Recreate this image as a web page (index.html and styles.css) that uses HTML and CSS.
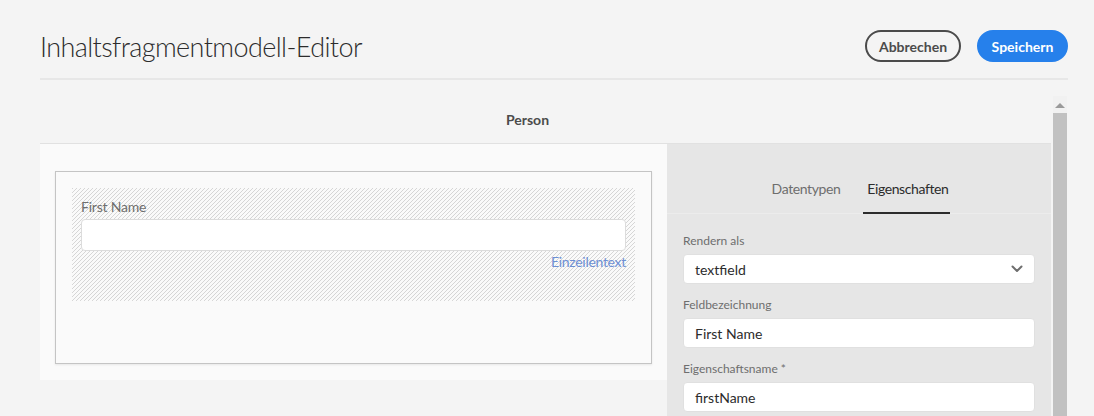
FILE: index.html
```html
<!DOCTYPE html>
<html lang="de">
<head>
<meta charset="utf-8">
<title>Inhaltsfragmentmodell-Editor</title>
<link rel="stylesheet" href="styles.css">
</head>
<body>
<div class="page">
  <header class="topbar">
    <h1 class="title">Inhaltsfragmentmodell-Editor</h1>
    <div class="actions">
      <button class="btn btn-secondary">Abbrechen</button>
      <button class="btn btn-primary">Speichern</button>
    </div>
  </header>

  <div class="workspace">
    <div class="editor">
      <div class="model-name">Person</div>
      <div class="panes">
        <div class="canvas">
          <div class="card">
            <div class="field-drop">
              <div class="field-label">First Name</div>
              <div class="field-input"></div>
              <div class="field-type">Einzeilentext</div>
            </div>
          </div>
        </div>
        <aside class="sidebar">
          <nav class="tabs">
            <span class="tab">Datentypen</span>
            <span class="tab tab-active">Eigenschaften</span>
          </nav>
          <div class="form">
            <div class="form-field">
              <label class="form-label">Rendern als</label>
              <div class="input select">
                <span>textfield</span>
                <svg class="chevron" width="12" height="8" viewBox="0 0 12 8"><path d="M1.5 1.5 L6 6 L10.5 1.5" fill="none" stroke="#6e6e6e" stroke-width="2" stroke-linecap="round" stroke-linejoin="round"/></svg>
              </div>
            </div>
            <div class="form-field">
              <label class="form-label">Feldbezeichnung</label>
              <div class="input">First Name</div>
            </div>
            <div class="form-field">
              <label class="form-label">Eigenschaftsname *</label>
              <div class="input">firstName</div>
            </div>
          </div>
        </aside>
      </div>
    </div>
    <div class="scrollbar">
      <div class="scroll-up"><svg width="10" height="6" viewBox="0 0 10 6"><path d="M0 6 L5 1 L10 6 Z" fill="#9a9a9a"/></svg></div>
      <div class="scroll-thumb"></div>
    </div>
  </div>
</div>
</body>
</html>
```

FILE: styles.css
```css
* { box-sizing: border-box; }
html, body { margin: 0; padding: 0; }
body {
  background: #f4f4f4;
  font-family: Lato, "Open Sans", sans-serif;
  color: #4b4b4b;
  height: 416px;
  overflow: hidden;
}
.page {
  padding: 0 26px 0 40px;
}
.topbar {
  height: 80px;
  padding-top: 14px;
  display: flex;
  align-items: flex-start;
  justify-content: space-between;
  border-bottom: 2px solid #e7e7e7;
}
.title {
  margin: 0;
  height: 64px;
  display: flex;
  align-items: center;
  font-size: 27px;
  font-weight: 300;
  color: #2c2c2c;
  letter-spacing: -0.6px;
}
.actions {
  height: 64px;
  display: flex;
  align-items: center;
  gap: 16px;
}
.btn {
  height: 32px;
  border-radius: 16px;
  font-family: inherit;
  font-size: 14px;
  font-weight: 700;
  padding: 0 10px;
  cursor: pointer;
}
.btn-secondary {
  width: 96px;
  background: transparent;
  border: 2px solid #4b4b4b;
  color: #4b4b4b;
}
.btn-primary {
  width: 91px;
  background: #2680eb;
  border: 2px solid #2680eb;
  color: #fff;
}
.workspace {
  margin-top: 16px;
  display: flex;
  gap: 2px;
  margin-right: 1px;
}
.editor {
  flex: 1;
}
.model-name {
  height: 48px;
  border-bottom: 1px solid #e1e1e1;
  display: flex;
  align-items: center;
  justify-content: center;
  padding-right: 36px;
  font-size: 14px;
  font-weight: 700;
  color: #4b4b4b;
}
.panes {
  display: flex;
  align-items: flex-start;
}
.canvas {
  width: 627px;
  height: 236px;
  background: #fafafa;
  padding: 27px 15px 0 15px;
}
.card {
  height: 193px;
  border: 1px solid #c4c4c4;
  background: #fafafa;
  box-shadow: 0 1px 2px rgba(0,0,0,0.08);
  padding: 16px;
}
.field-drop {
  height: 113px;
  padding: 10px 9px 0 9px;
  background: repeating-linear-gradient(135deg, #d6d6d6 0 0.8px, transparent 0.8px 2.83px);
}
.field-label {
  font-size: 14px;
  line-height: 18px;
  color: #6e6e6e;
  margin-bottom: 3px;
  letter-spacing: -0.2px;
}
.field-input {
  height: 32px;
  background: #fff;
  border: 1px solid #dcdcdc;
  border-radius: 4px;
}
.field-type {
  margin-top: 2px;
  text-align: right;
  font-size: 14px;
  line-height: 18px;
  color: #6d8fd4;
  letter-spacing: -0.3px;
}
.sidebar {
  flex: 1;
  height: 272px;
  background: #e6e6e6;
}
.tabs {
  height: 70px;
  display: flex;
  justify-content: center;
  align-items: stretch;
  gap: 21px;
  border-bottom: 1px solid #ececec;
}
.tab {
  display: flex;
  align-items: flex-end;
  padding: 0 2px 14px 4px;
  line-height: 18px;
  font-size: 14px;
  letter-spacing: -0.4px;
  color: #6e6e6e;
  border-bottom: 2px solid transparent;
  margin-bottom: -1px;
}
.tab-active {
  color: #2c2c2c;
  border-bottom-color: #2c2c2c;
}
.form {
  padding: 18px 16px 0 16px;
  display: flex;
  flex-direction: column;
  gap: 12px;
}
.form-field {
  display: flex;
  flex-direction: column;
}
.form-label {
  font-size: 12px;
  line-height: 18px;
  margin-bottom: 4px;
  color: #6e6e6e;
}
.input {
  height: 30px;
  background: #fff;
  border: 1px solid #e0e0e0;
  border-radius: 4px;
  padding: 0 11px;
  display: flex;
  align-items: center;
  font-size: 14px;
  color: #2c2c2c;
}
.select {
  justify-content: space-between;
}
.scrollbar {
  width: 14px;
  display: flex;
  flex-direction: column;
  height: 320px;
}
.scroll-up {
  height: 17px;
  background: #f1f1f1;
  display: flex;
  align-items: center;
  justify-content: center;
}
.scroll-thumb {
  flex: 1;
  background: #c1c1c1;
}
```
